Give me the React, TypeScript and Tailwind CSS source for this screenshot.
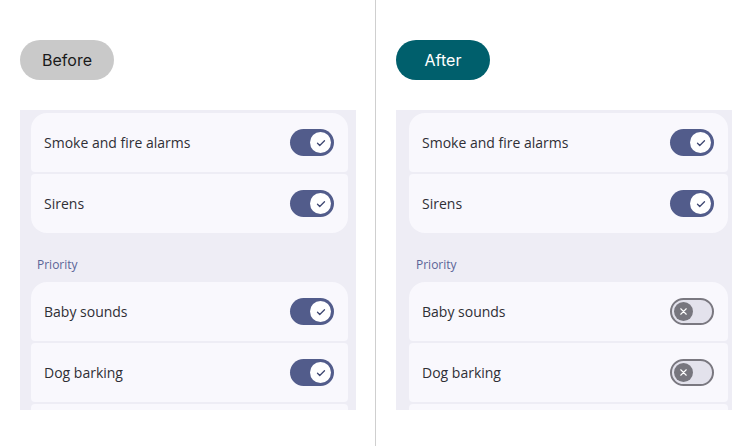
import React from "react";

const Check = () => (
  <svg width="12" height="12" viewBox="0 0 24 24" fill="none" stroke="#3d4670" strokeWidth="2.6" strokeLinecap="round" strokeLinejoin="round">
    <path d="M5 12.5l4.5 4.5L19 7.5" />
  </svg>
);

const XIcon = () => (
  <svg width="11" height="11" viewBox="0 0 24 24" fill="none" stroke="#ffffff" strokeWidth="2.4" strokeLinecap="round">
    <path d="M6 6l12 12M18 6L6 18" />
  </svg>
);

function Toggle({ on }: { on: boolean }) {
  if (on) {
    return (
      <div className="w-[44px] h-[27px] rounded-full bg-[#525c8b] flex items-center justify-end pr-[3px] shrink-0">
        <div className="w-[21px] h-[21px] rounded-full bg-white flex items-center justify-center">
          <Check />
        </div>
      </div>
    );
  }
  return (
    <div className="w-[44px] h-[27px] rounded-full bg-[#e3e2ec] border-2 border-[#7a7880] flex items-center pl-[2px] shrink-0">
      <div className="w-[19px] h-[19px] rounded-full bg-[#77767e] flex items-center justify-center">
        <XIcon />
      </div>
    </div>
  );
}

function Row({ label, on, pos }: { label: string; on: boolean; pos: "top" | "bottom" | "mid" }) {
  const radius =
    pos === "top" ? "rounded-t-[16px] rounded-b-[4px]" : pos === "bottom" ? "rounded-b-[16px] rounded-t-[4px]" : "rounded-[4px]";
  return (
    <div className={`h-[59px] bg-[#f9f8fd] ${radius} flex items-center justify-between pl-[13px] pr-[14px]`}>
      <span className="text-[14px] text-[#2f2f35]">{label}</span>
      <Toggle on={on} />
    </div>
  );
}

function Screen({ after, cardClass }: { after: boolean; cardClass: string }) {
  return (
    <div className="w-[336px] h-[300px] bg-[#eeedf5] overflow-hidden" style={{ fontFamily: "'Open Sans', Roboto, sans-serif" }}>
      <div className={`pt-[3px] ${cardClass} flex flex-col gap-[2px]`}>
        <Row label="Smoke and fire alarms" on pos="top" />
        <Row label="Sirens" on pos="bottom" />
      </div>
      <div className={`${after ? "pl-[20px]" : "pl-[17px]"} pt-[24px] pb-[9px] text-[12px] leading-[16px] text-[#5a6497]`}>Priority</div>
      <div className={`${cardClass} flex flex-col gap-[2px]`}>
        <Row label="Baby sounds" on={!after} pos="top" />
        <Row label="Dog barking" on={!after} pos="mid" />
        <div className="h-[59px] bg-[#f9f8fd] rounded-[4px]" />
      </div>
    </div>
  );
}

export default function App() {
  return (
    <div className="w-[752px] h-[446px] bg-white flex" style={{ fontFamily: "Inter, sans-serif" }}>
      <div className="w-[376px] h-full border-r border-[#cfcfcf] pl-[20px] pt-[40px]">
        <div className="w-[94px] h-[40px] rounded-full bg-[#c9c9c9] flex items-center justify-center text-[16px] text-[#1a1a1a]">
          Before
        </div>
        <div className="mt-[30px]">
          <Screen after={false} cardClass="pl-[11px] pr-[8px]" />
        </div>
      </div>
      <div className="w-[376px] h-full pl-[20px] pt-[40px]">
        <div className="w-[94px] h-[40px] rounded-full bg-[#005f6c] flex items-center justify-center text-[16px] text-white">
          After
        </div>
        <div className="mt-[30px]">
          <Screen after cardClass="pl-[13px] pr-[4px]" />
        </div>
      </div>
    </div>
  );
}
